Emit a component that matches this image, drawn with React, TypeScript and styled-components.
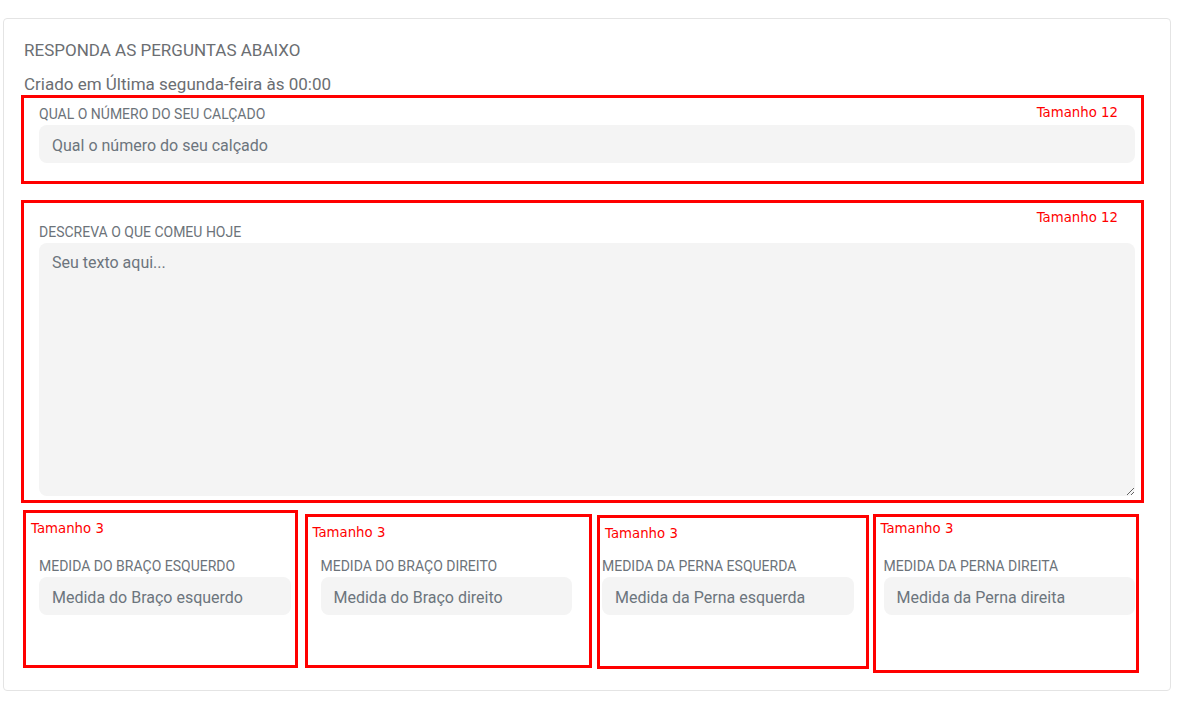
import styled, { createGlobalStyle } from 'styled-components';

const GlobalStyle = createGlobalStyle`
  body {
    margin: 0;
    background: #ffffff;
    font-family: Roboto, "Liberation Sans", sans-serif;
  }
  * {
    box-sizing: border-box;
  }
`;

interface Box {
  top: number,
  right: number,
  bottom: number,
  left: number,
  tagTop: number,
}

interface Question {
  label: string,
  placeholder: string,
  size: 3 | 12,
  multiline?: boolean,
  padTop: number,
  padBottom: number,
  box: Box,
  tagAlign: 'left' | 'right',
}

const questions: Question[] = [
  {
    label: 'Qual o número do seu calçado',
    placeholder: 'Qual o número do seu calçado',
    size: 12,
    padTop: 8,
    padBottom: 37,
    box: { top: -1, right: 6, bottom: 16, left: -3, tagTop: 8 },
    tagAlign: 'right',
  },
  {
    label: 'Descreva o que comeu hoje',
    placeholder: 'Seu texto aqui...',
    size: 12,
    multiline: true,
    padTop: 22,
    padBottom: 7,
    box: { top: 0, right: 6, bottom: 0, left: -3, tagTop: 8 },
    tagAlign: 'right',
  },
  {
    label: 'Medida do Braço esquerdo',
    placeholder: 'Medida do Braço esquerdo',
    size: 3,
    padTop: 53,
    padBottom: 55,
    box: { top: 7, right: 8, bottom: 2, left: -1, tagTop: 8 },
    tagAlign: 'left',
  },
  {
    label: 'Medida do Braço direito',
    placeholder: 'Medida do Braço direito',
    size: 3,
    padTop: 53,
    padBottom: 55,
    box: { top: 11, right: -5, bottom: 2, left: -1, tagTop: 8 },
    tagAlign: 'left',
  },
  {
    label: 'Medida da Perna esquerda',
    placeholder: 'Medida da Perna esquerda',
    size: 3,
    padTop: 53,
    padBottom: 55,
    box: { top: 12, right: 0, bottom: 1, left: 10, tagTop: 8 },
    tagAlign: 'left',
  },
  {
    label: 'Medida da Perna direita',
    placeholder: 'Medida da Perna direita',
    size: 3,
    padTop: 53,
    padBottom: 55,
    box: { top: 11, right: 11, bottom: -3, left: 4, tagTop: 4 },
    tagAlign: 'left',
  },
];

export default function App() {
  return (
    <>
      <GlobalStyle />
      <Page>
        <Card>
          <Title>Responda as perguntas abaixo</Title>
          <Created>Criado em Última segunda-feira às 00:00</Created>
          <Row>
            {questions.map((q) => (
              <Col key={q.label} $size={q.size} $padTop={q.padTop} $padBottom={q.padBottom}>
                <Label>{q.label}</Label>
                {q.multiline
                  ? <TextArea placeholder={q.placeholder} />
                  : <Input placeholder={q.placeholder} />}
                <Annotation $box={q.box} $align={q.tagAlign}>
                  Tamanho {q.size}
                </Annotation>
              </Col>
            ))}
          </Row>
        </Card>
      </Page>
    </>
  );
}

const Page = styled.div`
  padding: 18px 15px 15px 3px;
`;

const Card = styled.div`
  border: 1px solid #e4e4e4;
  border-radius: 4px;
  padding: 19px 20px 20px;
`;

const Title = styled.div`
  font-size: 17px;
  line-height: 24px;
  color: #6b6e72;
  text-transform: uppercase;
  margin-bottom: 10px;
`;

const Created = styled.div`
  font-size: 17px;
  line-height: 24px;
  color: #6b6e72;
`;

const Row = styled.div`
  display: flex;
  flex-wrap: wrap;
`;

const Col = styled.div<{ $size: number, $padTop: number, $padBottom: number }>`
  position: relative;
  width: ${p => (p.$size / 12) * 100}%;
  padding: ${p => p.$padTop}px 15px ${p => p.$padBottom}px;
  display: flex;
  flex-direction: column;
`;

const Label = styled.label`
  font-size: 14px;
  line-height: 20px;
  color: #6c737a;
  text-transform: uppercase;
  white-space: nowrap;
  margin-bottom: 1px;
`;

const fieldBase = `
  width: 100%;
  border: none;
  outline: none;
  background: #f4f4f4;
  border-radius: 8px;
  padding: 0 13px;
  font-family: Roboto, "Liberation Sans", sans-serif;
  font-size: 16px;
  line-height: 24px;
  color: #495057;
  &::placeholder {
    color: #6c757d;
    opacity: 1;
  }
`;

const Input = styled.input`
  ${fieldBase}
  height: 38px;
  padding-top: 2px;
`;

const TextArea = styled.textarea`
  ${fieldBase}
  height: 253px;
  padding-top: 8px;
  display: block;
`;

const Annotation = styled.div<{ $box: Box, $align: 'left' | 'right' }>`
  position: absolute;
  top: ${p => p.$box.top}px;
  right: ${p => p.$box.right}px;
  bottom: ${p => p.$box.bottom}px;
  left: ${p => p.$box.left}px;
  border: 3px solid #ff0000;
  pointer-events: none;
  padding: ${p => (p.$align === 'right'
    ? `${p.$box.tagTop - 1}px 23px 0 0`
    : `${p.$box.tagTop}px 0 0 5px`)};
  text-align: ${p => p.$align};
  font-family: "DejaVu Sans", Verdana, sans-serif;
  font-size: 13.3px;
  line-height: 16px;
  color: #ff0000;
`;
